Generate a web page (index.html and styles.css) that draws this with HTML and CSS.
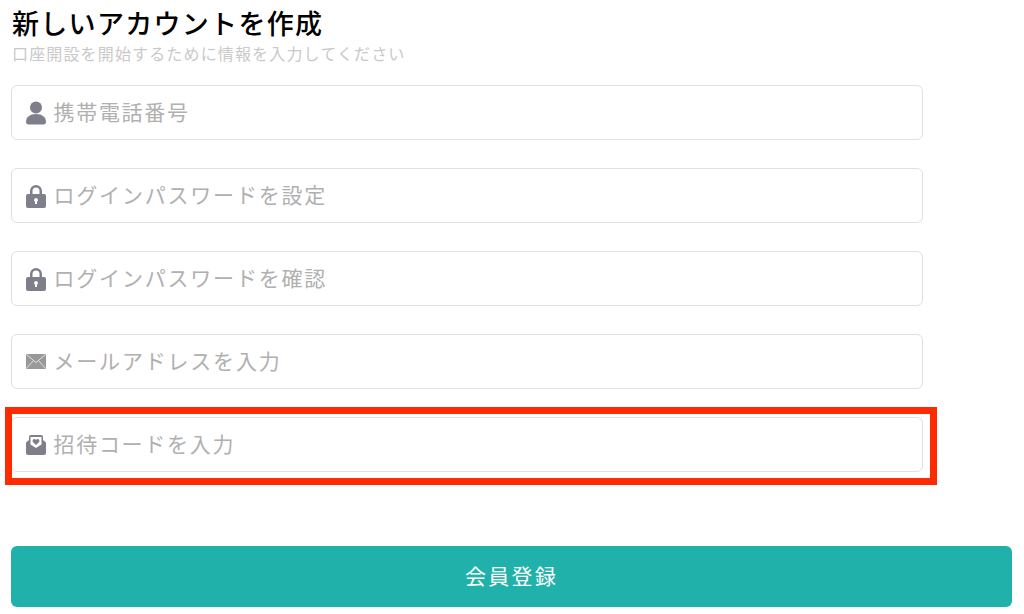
FILE: index.html
```html
<!DOCTYPE html>
<html lang="ja">
<head>
<meta charset="utf-8">
<title>新しいアカウントを作成</title>
<link rel="stylesheet" href="styles.css">
</head>
<body>
<main class="page">
  <header class="head">
    <h1 class="title">新しいアカウントを作成</h1>
    <p class="subtitle">口座開設を開始するために情報を入力してください</p>
  </header>
  <form class="fields">
    <div class="field">
      <svg class="icon" viewBox="0 0 20 24"><circle cx="10" cy="6.5" r="6"/><path d="M0 21c0-5 4-8 10-8s10 3 10 8c0 1.500-1 2.500-2.500 2.500h-15C1 23.500 0 22.500 0 21z"/></svg>
      <span class="placeholder">携帯電話番号</span>
    </div>
    <div class="field">
      <svg class="icon" viewBox="0 0 20 24"><path fill-rule="evenodd" d="M4 10V7a6 6 0 0 1 12 0v3h2a2 2 0 0 1 2 2v10a2 2 0 0 1-2 2H2a2 2 0 0 1-2-2V12a2 2 0 0 1 2-2h2zm2.500 0h7V7a3.500 3.500 0 0 0-7 0v3zM10 14a2 2 0 0 0-1 3.700V20h2v-2.300A2 2 0 0 0 10 14z"/></svg>
      <span class="placeholder placeholder-kana">ログインパスワードを設定</span>
    </div>
    <div class="field">
      <svg class="icon" viewBox="0 0 20 24"><path fill-rule="evenodd" d="M4 10V7a6 6 0 0 1 12 0v3h2a2 2 0 0 1 2 2v10a2 2 0 0 1-2 2H2a2 2 0 0 1-2-2V12a2 2 0 0 1 2-2h2zm2.500 0h7V7a3.500 3.500 0 0 0-7 0v3zM10 14a2 2 0 0 0-1 3.700V20h2v-2.300A2 2 0 0 0 10 14z"/></svg>
      <span class="placeholder placeholder-kana">ログインパスワードを確認</span>
    </div>
    <div class="field">
      <svg class="icon icon-mail" viewBox="0 0 20 15"><rect width="20" height="15" fill="#999"/><path d="M0.500 0.500L10 8.500l9.500-8M0.500 14.500L7.500 6.500M19.500 14.500L12.500 6.500" fill="none" stroke="#e2e2e2" stroke-width="1"/></svg>
      <span class="placeholder placeholder-kana">メールアドレスを入力</span>
    </div>
    <div class="field">
      <svg class="icon icon-invite" viewBox="0 0 20 20"><path d="M5 0h10a2 2 0 0 1 2 2v3l3 2.500V18a2 2 0 0 1-2 2H2a2 2 0 0 1-2-2V7.500L3 5V2a2 2 0 0 1 2-2z"/><path d="M4.500 2h11v7.500L10 13 4.500 9.500z" fill="#fff"/><path d="M10 10L7 7.200C6 6 6.800 4 8.300 4c.8 0 1.300.4 1.700 1 .4-.6.900-1 1.700-1C13.200 4 14 6 13 7.200z"/></svg>
      <span class="placeholder">招待コードを入力</span>
      <span class="highlight"></span>
    </div>
  </form>
  <button class="submit" type="button">会員登録</button>
</main>
</body>
</html>
```
FILE: styles.css
```css
* { box-sizing: border-box; }
html, body { margin: 0; padding: 0; background: #fff; }
body {
  width: 1024px;
  height: 614px;
  overflow: hidden;
  font-family: "Liberation Serif", "Noto Sans CJK JP", serif;
}
.page {
  display: flex;
  flex-direction: column;
  padding: 5px 12px 0 11px;
}
.head { padding-left: 1px; }
.title {
  margin: 0;
  font-family: "Noto Sans CJK JP", sans-serif;
  font-size: 27px;
  font-weight: 500;
  line-height: 36px;
  letter-spacing: 1.300px;
  color: #000;
}
.subtitle {
  margin: 0;
  font-family: "Noto Sans CJK JP", sans-serif;
  font-size: 16px;
  line-height: 24px;
  letter-spacing: 1.150px;
  color: #c9c9c9;
}
.fields {
  display: flex;
  flex-direction: column;
  gap: 28px;
  width: 912px;
  margin-top: 20px;
}
.field {
  position: relative;
  display: flex;
  align-items: center;
  height: 55px;
  padding-left: 13.500px;
  border: 1.500px solid #e0e0e0;
  border-radius: 6px;
}
.icon {
  flex: none;
  width: 20px;
  height: 24px;
  fill: #7f7f8c;
}
.icon-mail { height: 15px; }
.icon-invite { height: 20px; }
.placeholder {
  margin-left: 8px;
  padding-bottom: 3px;
  font-family: "Noto Sans CJK JP", sans-serif;
  font-size: 21px;
  line-height: 28px;
  letter-spacing: 1.700px;
  color: #b0b0b0;
}
.placeholder-kana { margin-left: 8px; letter-spacing: 1.800px; }
.highlight {
  position: absolute;
  top: -11.500px;
  left: -7.500px;
  right: -14.500px;
  bottom: -13.500px;
  border: 7px solid #ff2a00;
  pointer-events: none;
}
.submit {
  width: 1001px;
  height: 61px;
  margin-top: 74px;
  padding: 0 0 4px;
  border: 0;
  border-radius: 6px;
  background: #20b2aa;
  color: #fff;
  font-family: "Noto Sans CJK JP", sans-serif;
  font-size: 21px;
  letter-spacing: 2.300px;
}
```
